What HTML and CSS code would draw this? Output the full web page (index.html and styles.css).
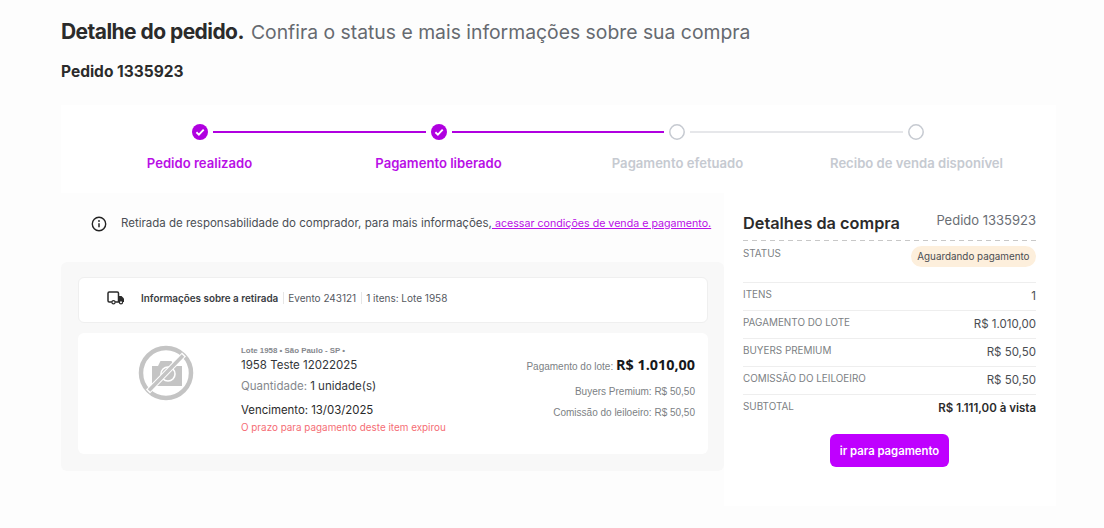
FILE: index.html
```html
<!DOCTYPE html>
<html lang="pt-BR">
<head>
    <meta charset="UTF-8">
    <meta name="viewport" content="width=device-width, initial-scale=1.0">
    <title>Detalhe do pedido</title>
    <link rel="stylesheet" href="styles.css">
</head>
<body>
    <div class="page">
        <header class="page-header">
            <h1>Detalhe do pedido.</h1>
            <p>Confira o status e mais informações sobre sua compra</p>
        </header>
        <h2 class="order-number">Pedido 1335923</h2>

        <!-- Progress -->
        <section class="stepper">
            <div class="track">
                <svg class="dot" viewBox="0 0 16 16"><circle cx="8" cy="8" r="8" fill="#b000e0"/><path d="M4.4 8.3l2.5 2.4 4.8-5" fill="none" stroke="#fff" stroke-width="1.9"/></svg>
                <span class="line done"></span>
                <svg class="dot" viewBox="0 0 16 16"><circle cx="8" cy="8" r="8" fill="#b000e0"/><path d="M4.4 8.3l2.5 2.4 4.8-5" fill="none" stroke="#fff" stroke-width="1.9"/></svg>
                <span class="line done"></span>
                <svg class="dot" viewBox="0 0 16 16"><circle cx="8" cy="8" r="7.2" fill="none" stroke="#c6cad1" stroke-width="1.5"/></svg>
                <span class="line"></span>
                <svg class="dot" viewBox="0 0 16 16"><circle cx="8" cy="8" r="7.2" fill="none" stroke="#c6cad1" stroke-width="1.5"/></svg>
            </div>
            <div class="step-labels">
                <span class="done">Pedido realizado</span>
                <span class="done">Pagamento liberado</span>
                <span>Pagamento efetuado</span>
                <span>Recibo de venda disponível</span>
            </div>
        </section>

        <div class="columns">
            <main class="left">
                <div class="notice">
                    <svg class="info-icon" viewBox="0 0 16 16"><circle cx="8" cy="8" r="6.7" fill="none" stroke="#222" stroke-width="1.4"/><path d="M8 7.2v4" stroke="#222" stroke-width="1.5"/><circle cx="8" cy="5" r="0.9" fill="#222"/></svg>
                    <p>Retirada de responsabilidade do comprador, para mais informações,<a href="#"> acessar condições de venda e pagamento.</a></p>
                </div>

                <section class="items">
                    <div class="pickup">
                        <svg class="truck-icon" viewBox="0 0 18 14"><path d="M5 11H2.2A1.2 1.2 0 0 1 1 9.8V2.2A1.2 1.2 0 0 1 2.2 1h8.1a1.2 1.2 0 0 1 1.2 1.2V11H8" fill="none" stroke="#2b2b2b" stroke-width="1.5"/><path d="M11.5 5h3l2.500 2.500V11h-5.500z" fill="#2b2b2b"/><circle cx="6.500" cy="11.300" r="1.600" fill="#fff" stroke="#2b2b2b" stroke-width="1.200"/><circle cx="14" cy="11.300" r="1.600" fill="#fff" stroke="#2b2b2b" stroke-width="1.200"/></svg>
                        <strong>Informações sobre a retirada</strong>
                        <span>Evento 243121</span>
                        <span>1 itens: Lote 1958</span>
                    </div>

                    <article class="lot">
                        <div class="lot-photo">
                            <svg viewBox="0 0 56 56"><circle cx="28" cy="28" r="25" fill="none" stroke="#c4c4c4" stroke-width="4.500"/><path d="M14 21h6l2.500-5h11l2.500 5h8v20H14z" fill="#c4c4c4"/><circle cx="30" cy="29" r="7" fill="none" stroke="#fff" stroke-width="1.600"/><path d="M46 9.500L10 46.500" stroke="#fff" stroke-width="5.500"/><path d="M45 10.500L11 45.500" stroke="#c4c4c4" stroke-width="3.500"/></svg>
                        </div>
                        <div class="lot-info">
                            <p class="lot-place">Lote 1958 • São Paulo - SP •</p>
                            <p class="lot-name">1958 Teste 12022025</p>
                            <p class="lot-qty"><span>Quantidade:</span> 1 unidade(s)</p>
                            <p class="lot-due">Vencimento: 13/03/2025</p>
                            <p class="lot-expired">O prazo para pagamento deste item expirou</p>
                        </div>
                        <div class="lot-prices">
                            <p class="main-price">Pagamento do lote: <strong>R$ 1.010,00</strong></p>
                            <p>Buyers Premium: R$ 50,50</p>
                            <p>Comissão do leiloeiro: R$ 50,50</p>
                        </div>
                    </article>
                </section>
            </main>

            <aside class="summary">
                <div class="summary-head">
                    <h3>Detalhes da compra</h3>
                    <span>Pedido 1335923</span>
                </div>
                <div class="row status-row">
                    <span class="row-label">STATUS</span>
                    <span class="badge">Aguardando pagamento</span>
                </div>
                <div class="row">
                    <span class="row-label">ITENS</span>
                    <span class="row-value">1</span>
                </div>
                <div class="row">
                    <span class="row-label">PAGAMENTO DO LOTE</span>
                    <span class="row-value">R$ 1.010,00</span>
                </div>
                <div class="row">
                    <span class="row-label">BUYERS PREMIUM</span>
                    <span class="row-value">R$ 50,50</span>
                </div>
                <div class="row">
                    <span class="row-label">COMISSÃO DO LEILOEIRO</span>
                    <span class="row-value">R$ 50,50</span>
                </div>
                <div class="row">
                    <span class="row-label">SUBTOTAL</span>
                    <span class="row-value total">R$ 1.111,00 à vista</span>
                </div>
                <button class="pay-button">ir para pagamento</button>
            </aside>
        </div>
    </div>
</body>
</html>
```

FILE: styles.css
```css
body {
    margin: 0;
    height: 528px;
    overflow: hidden;
    background: #fdfdfd;
    color: #2b2b2b;
    font-family: Inter, "Liberation Sans", sans-serif;
}
p, h1, h2, h3 {
    margin: 0;
}
.page {
    width: 995px;
    padding: 19px 0 0 61px;
}
.page-header {
    display: flex;
    align-items: baseline;
    gap: 7px;
    height: 26px;
}
.page-header h1 {
    font-size: 21px;
    font-weight: 700;
    letter-spacing: -0.55px;
    color: #2b2b2b;
}
.page-header p {
    font-size: 19.35px;
    color: #666a70;
}
.order-number {
    margin-top: 17px;
    margin-bottom: 23px;
    font-size: 15.5px;
    font-weight: 700;
    line-height: 20px;
    color: #2b2b2b;
}
.stepper {
    height: 88px;
    background: #fff;
    padding: 19px 0 0 19px;
    box-sizing: border-box;
}
.track {
    display: flex;
    align-items: center;
    width: 732px;
    margin-left: 112px;
}
.dot {
    width: 16px;
    height: 16px;
    flex: none;
}
.line {
    flex: 1;
    height: 2px;
    margin: 0 5px;
    background: #e6e7ea;
}
.line.done {
    background: #b000e0;
}
.step-labels {
    display: grid;
    grid-template-columns: repeat(4, 239px);
    margin-top: 14px;
    font-size: 13.1px;
    font-weight: 600;
    line-height: 18px;
    text-align: center;
    color: #c6cad1;
}
.step-labels .done {
    color: #b90fe6;
}
.columns {
    display: flex;
}
.left {
    width: 663px;
    flex: none;
}
.notice {
    display: flex;
    align-items: center;
    height: 70px;
    padding: 0 12px 8px 30px;
    box-sizing: border-box;
}
.info-icon {
    width: 16px;
    height: 16px;
    margin-right: 14px;
    flex: none;
}
.notice p {
    font-size: 11.5px;
    color: #4b4f55;
    white-space: nowrap;
    margin-top: -3px;
}
.notice a {
    font-size: 10.67px;
    color: #b90fe6;
    text-decoration: underline;
}
.items {
    margin-top: -1px;
    background: #f8f8f8;
    border-radius: 6px;
    padding: 15px 16px 16px 17px;
    height: 209px;
    box-sizing: border-box;
}
.pickup {
    display: flex;
    align-items: center;
    height: 46px;
    box-sizing: border-box;
    padding: 0 0 4px 28px;
    background: #fff;
    border: 1px solid #efefef;
    border-radius: 6px;
    font-size: 10px;
    color: #55595f;
}
.truck-icon {
    width: 18px;
    height: 14px;
    margin-right: 16px;
    flex: none;
}
.pickup strong {
    font-size: 9.9px;
    font-weight: 600;
    color: #3a3d42;
}
.pickup span {
    margin-left: 5px;
    padding-left: 4px;
    border-left: 1px solid #e6e6e6;
}
.lot {
    display: flex;
    margin-top: 10px;
    height: 121px;
    background: #fff;
    border-radius: 6px;
}
.lot-photo {
    width: 163px;
    padding: 12px 0 0 60px;
    box-sizing: border-box;
    flex: none;
}
.lot-photo svg {
    width: 56px;
    height: 56px;
    display: block;
}
.lot-info {
    padding-top: 13px;
    flex: 1;
    white-space: nowrap;
}
.lot-place {
    font-family: "Liberation Sans", sans-serif;
    font-size: 7.9px;
    font-weight: 700;
    line-height: 9px;
    color: #85888d;
}
.lot-name {
    font-size: 11.5px;
    line-height: 16px;
    margin-top: 2px;
    color: #33363a;
}
.lot-qty {
    font-size: 11.5px;
    line-height: 16px;
    margin-top: 5px;
    color: #33363a;
}
.lot-qty span {
    color: #85888d;
}
.lot-due {
    font-size: 11.4px;
    line-height: 16px;
    margin-top: 8px;
    color: #2b2b2b;
}
.lot-expired {
    font-size: 9.9px;
    line-height: 13px;
    margin-top: 3px;
    color: #f56d75;
}
.lot-prices {
    width: 190px;
    flex: none;
    padding: 23px 13px 0 0;
    box-sizing: border-box;
    text-align: right;
    font-family: "Liberation Sans", sans-serif;
    font-size: 10px;
    color: #7c7f84;
}
.lot-prices p {
    line-height: 14px;
    margin-top: 7px;
    white-space: nowrap;
}
.lot-prices .main-price {
    margin-top: 0;
    margin-bottom: 9px;
    line-height: 18px;
}
.main-price strong {
    font-family: "Open Sans", sans-serif;
    font-size: 14.4px;
    font-weight: 700;
    color: #16181b;
}
.summary {
    width: 332px;
    flex: none;
    box-sizing: border-box;
    height: 313px;
    padding: 0 20px 0 19px;
    background: #fff;
}
.summary-head {
    display: flex;
    justify-content: space-between;
    height: 48px;
    padding-top: 19px;
    box-sizing: border-box;
    background: repeating-linear-gradient(90deg, #c8c8c8 0 5px, transparent 5px 9px) bottom / 100% 1px no-repeat;
}
.summary-head h3 {
    font-size: 16.3px;
    font-weight: 600;
    line-height: 22px;
    color: #2b2b2b;
}
.summary-head span {
    font-size: 13px;
    line-height: 16px;
    color: #6a6e74;
}
.row {
    display: flex;
    justify-content: space-between;
    height: 28px;
    box-sizing: border-box;
    padding-top: 5px;
    border-top: 1px solid #eeeeee;
}
.row:last-of-type {
    height: 30px;
}
.status-row {
    height: 41px;
    border-top: none;
    padding-top: 6px;
}
.row-label {
    font-size: 9.9px;
    line-height: 13px;
    color: #7c7f84;
}
.row-value {
    font-size: 11.5px;
    line-height: 16px;
    color: #4a4d52;
}
.row-value.total {
    font-weight: 600;
    color: #2b2b2b;
}
.badge {
    align-self: flex-start;
    margin-top: -1px;
    padding: 0 6.5px;
    height: 21px;
    line-height: 21px;
    border-radius: 11px;
    background: #fdefdc;
    font-size: 9.85px;
    color: #4a4d52;
}
.pay-button {
    display: block;
    margin: 10px auto 0;
    width: 119px;
    height: 33px;
    padding: 0;
    border: none;
    border-radius: 6px;
    background: #bf00ff;
    color: #fff;
    font-family: inherit;
    font-size: 11.3px;
    font-weight: 600;
    cursor: pointer;
}
```
